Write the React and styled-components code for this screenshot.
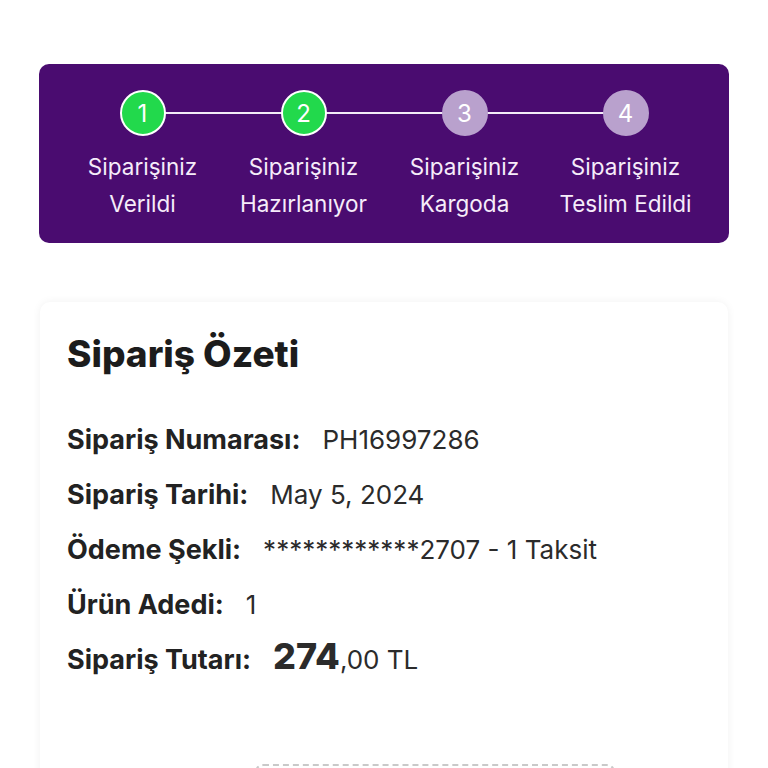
import React from 'react'
import styled, { createGlobalStyle } from 'styled-components'

const GlobalStyle = createGlobalStyle`
  body {
    margin: 0;
    background: #ffffff;
    font-family: Inter, "Noto Sans", sans-serif;
    color: #1f1f1f;
  }
`

const Page = styled.div`
  width: 768px;
  height: 768px;
  overflow: hidden;
  padding: 64px 39px 0;
  box-sizing: border-box;
`

const Stepper = styled.div`
  background: #4a0c70;
  border-radius: 10px;
  height: 179px;
  padding: 0 23px;
  display: grid;
  grid-template-columns: repeat(4, 1fr);
  position: relative;
`

const Line = styled.div`
  position: absolute;
  top: 48px;
  left: 103px;
  right: 103px;
  height: 2px;
  background: #f4ecf8;
`

const Step = styled.div`
  display: flex;
  flex-direction: column;
  align-items: center;
  padding-top: 26px;
  position: relative;
`

const Circle = styled.div`
  width: 46px;
  height: 46px;
  border-radius: 50%;
  box-sizing: border-box;
  border: 2px solid ${p => (p.done ? '#ffffff' : '#b9a1cd')};
  background: ${p => (p.done ? '#22d94c' : '#b9a1cd')};
  color: #ffffff;
  font-size: 24px;
  display: flex;
  align-items: center;
  justify-content: center;
`

const StepLabel = styled.div`
  margin-top: 12px;
  color: #f6ecfa;
  font-size: 22.5px;
  line-height: 37px;
  text-align: center;
  white-space: nowrap;
`

const Card = styled.div`
  margin-top: 59px;
  margin-left: 1px;
  width: 688px;
  background: #ffffff;
  border-radius: 10px;
  box-shadow: 0 0 8px rgba(0, 0, 0, 0.06);
  padding: 28px 27px 0;
  box-sizing: border-box;
  height: 600px;
`

const Title = styled.h2`
  margin: 0 0 45px;
  font-size: 37px;
  font-weight: 800;
  line-height: 48px;
  color: #1c1c1c;
`

const Row = styled.div`
  display: flex;
  align-items: baseline;
  gap: 22px;
  height: 55px;
  font-size: 27px;
  line-height: 33px;
`

const Label = styled.span`
  font-weight: 700;
  color: #222222;
`

const Value = styled.span`
  font-size: 26px;
  color: #2b2b2b;
`

const Big = styled.span`
  font-size: 36px;
  font-weight: 800;
  line-height: 0;
`

const Dashed = styled.div`
  margin: 66px 0 0 188px;
  width: 356px;
  height: 60px;
  border: 2px dashed #c9c9c9;
  border-radius: 8px;
`

const steps = [
  { n: 1, top: 'Siparişiniz', bottom: 'Verildi', done: true },
  { n: 2, top: 'Siparişiniz', bottom: 'Hazırlanıyor', done: true },
  { n: 3, top: 'Siparişiniz', bottom: 'Kargoda', done: false },
  { n: 4, top: 'Siparişiniz', bottom: 'Teslim Edildi', done: false },
]

const rows = [
  ['Sipariş Numarası:', 'PH16997286'],
  ['Sipariş Tarihi:', 'May 5, 2024'],
  ['Ödeme Şekli:', '************2707 - 1 Taksit'],
  ['Ürün Adedi:', '1'],
]

const App = () => {
  return (
    <Page>
      <GlobalStyle />
      <Stepper>
        <Line />
        {steps.map(s => (
          <Step key={s.n}>
            <Circle done={s.done}>{s.n}</Circle>
            <StepLabel>
              {s.top}
              <br />
              {s.bottom}
            </StepLabel>
          </Step>
        ))}
      </Stepper>
      <Card>
        <Title>Sipariş Özeti</Title>
        {rows.map(([l, v]) => (
          <Row key={l}>
            <Label>{l}</Label>
            <Value>{v}</Value>
          </Row>
        ))}
        <Row>
          <Label>Sipariş Tutarı:</Label>
          <Value>
            <Big>274</Big>,00 TL
          </Value>
        </Row>
        <Dashed />
      </Card>
    </Page>
  )
}

export default App
